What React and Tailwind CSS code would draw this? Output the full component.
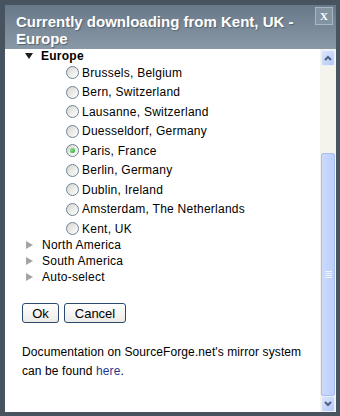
import React from 'react';

const cities = [
  { name: 'Brussels, Belgium' },
  { name: 'Bern, Switzerland' },
  { name: 'Lausanne, Switzerland' },
  { name: 'Duesseldorf, Germany' },
  { name: 'Paris, France', checked: true },
  { name: 'Berlin, Germany' },
  { name: 'Dublin, Ireland' },
  { name: 'Amsterdam, The Netherlands' },
  { name: 'Kent, UK' },
];

const regions = ['North America', 'South America', 'Auto-select'];

function Radio({ checked }) {
  return (
    <span className="w-[13px] h-[13px] rounded-full border border-[#6d8299] bg-[linear-gradient(135deg,#d6d6ce,#ffffff)] flex items-center justify-center shrink-0">
      {checked && (
        <span className="w-[5px] h-[5px] rounded-full bg-[radial-gradient(circle_at_35%_35%,#8fe28f,#21a121)]" />
      )}
    </span>
  );
}

function Chevron({ up }) {
  return (
    <svg width="8" height="6" viewBox="0 0 8 6">
      <path
        d={up ? 'M1 5 L4 2 L7 5' : 'M1 1 L4 4 L7 1'}
        fill="none"
        stroke="#4d6185"
        strokeWidth="2"
      />
    </svg>
  );
}

function ScrollButton({ up }) {
  return (
    <div className="h-[16px] mx-px rounded-[2px] border border-[#e8efff] bg-[linear-gradient(135deg,#dbe5fd,#b6c9f5)] flex items-center justify-center">
      <Chevron up={up} />
    </div>
  );
}

export default function App() {
  return (
    <div className="w-[340px] h-[416px] bg-[#47545f] pt-[5px] pl-[5px] pr-[4px] pb-[4px] overflow-hidden font-['Liberation_Sans',Arial,sans-serif]">
      <div className="h-full flex flex-col">
        {/* Title bar */}
        <div className="h-[44px] shrink-0 flex items-start bg-[linear-gradient(180deg,#677889,#8a99a7)]">
          <div className="flex-1 pl-[11px] pt-[8px] text-white font-bold text-[15px] leading-[17px] [text-shadow:1px_1px_1px_#56636f]">
            Currently downloading from Kent, UK -<br />
            Europe
          </div>
          <div className="mt-[2px] mr-[3px] w-[18px] h-[18px] border border-[#a9b5c0] bg-[#8293a2] flex items-center justify-center text-white font-bold text-[11px] font-['Liberation_Serif',serif]">
            X
          </div>
        </div>

        {/* Body */}
        <div className="flex-1 flex bg-white min-h-0">
          <div className="flex-1 overflow-hidden text-[12px] tracking-[0.25px] text-black">
            <div className="pl-[20px] h-[15px] -mt-px flex items-center">
              <svg width="16" height="6" viewBox="0 0 16 6" className="shrink-0">
                <polygon points="0,0 8,0 4,6" fill="#1e1e1e" />
              </svg>
              <span className="font-bold">Europe</span>
            </div>
            <div className="pl-[61px]">
              {cities.map((c) => (
                <div key={c.name} className="h-[19.5px] flex items-center gap-[3px]">
                  <Radio checked={c.checked} />
                  <span>{c.name}</span>
                </div>
              ))}
            </div>
            <div className="pl-[21px] -mt-[1.5px]">
              {regions.map((r) => (
                <div key={r} className="h-[16px] flex items-center">
                  <svg width="16" height="8" viewBox="0 0 16 8" className="shrink-0">
                    <polygon points="0,0 7,4 0,8" fill="#a4a4a4" />
                  </svg>
                  <span>{r}</span>
                </div>
              ))}
            </div>
            <div className="pl-[17px] mt-[18px] flex gap-[5px]">
              <button className="w-[37px] h-[20px] rounded-[3px] border border-[#2c4a6e] bg-[linear-gradient(180deg,#ffffff,#ecebe6)] text-[13px] tracking-normal">
                Ok
              </button>
              <button className="w-[62px] h-[20px] rounded-[3px] border border-[#2c4a6e] bg-[linear-gradient(180deg,#ffffff,#ecebe6)] text-[13px] tracking-normal">
                Cancel
              </button>
            </div>
            <p className="pl-[17px] mt-[20px] leading-[18.5px] tracking-[0.1px]">
              Documentation on SourceForge.net's mirror system
              <br />
              can be found <span className="text-[#1f3a8f]">here</span>.
            </p>
          </div>

          {/* Scrollbar */}
          <div className="w-[16px] shrink-0 pt-px flex flex-col bg-[#f5f4ec]">
            <ScrollButton up />
            <div className="h-[87px]" />
            <div className="flex-1 mx-px rounded-[2px] border border-[#a9bdee] bg-[linear-gradient(90deg,#cbdafd,#bccff9)] flex items-center justify-center">
              <div className="flex flex-col gap-[1px]">
                <span className="w-[7px] h-px bg-[#eef3ff]" />
                <span className="w-[7px] h-px bg-[#eef3ff]" />
                <span className="w-[7px] h-px bg-[#eef3ff]" />
                <span className="w-[7px] h-px bg-[#eef3ff]" />
              </div>
            </div>
            <ScrollButton />
          </div>
        </div>
      </div>
    </div>
  );
}
